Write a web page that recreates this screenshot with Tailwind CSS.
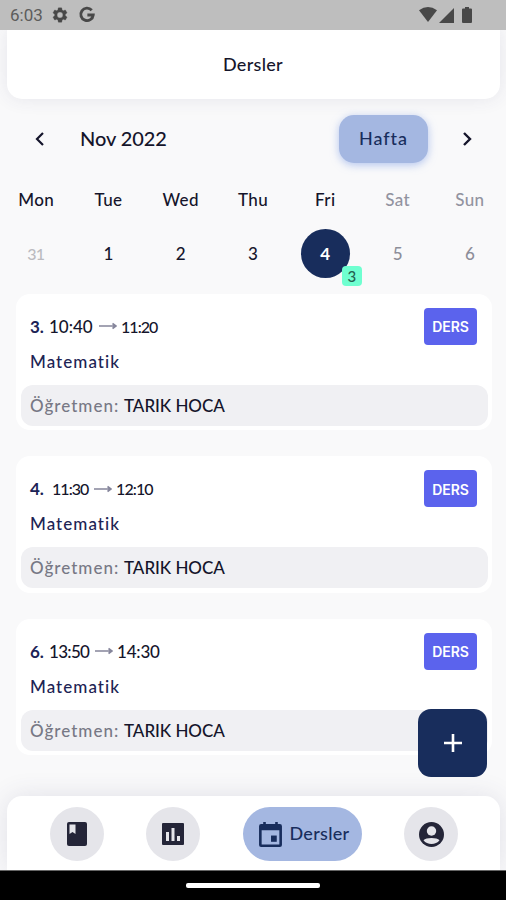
<!DOCTYPE html>
<html lang="tr">
<head>
<meta charset="utf-8">
<title>Dersler</title>
<script src="https://cdn.jsdelivr.net/npm/@tailwindcss/browser@4"></script>
</head>
<body class="w-[506px] h-[900px] overflow-hidden">
<div class="relative flex h-[900px] w-[506px] flex-col overflow-hidden bg-[#f9f9fa] font-['Lato','Noto_Sans',sans-serif] font-medium text-[#15152b]">
  <div class="relative z-10 flex h-[30px] shrink-0 items-center bg-[#bebebe] px-[10px] text-[#484848]">
    <span class="w-[41px] pt-[2px] font-['Roboto',sans-serif] text-[17px] font-normal text-[#5c5c5c]">6:03</span>
    <svg class="h-[18px] w-[18px]" viewBox="0 0 24 24" fill="currentColor" stroke="currentColor" stroke-width="0.400"><path fill-rule="evenodd" d="M19.14 12.94a7 7 0 0 0 0-1.88l2.03-1.58a.5.5 0 0 0 .12-.64l-1.92-3.32a.5.5 0 0 0-.59-.22l-2.39.96a7 7 0 0 0-1.62-.94l-.36-2.54A.5.5 0 0 0 13.9 2.4h-3.8a.5.5 0 0 0-.5.4l-.36 2.54a7 7 0 0 0-1.62.94l-2.39-.96a.5.5 0 0 0-.6.22L2.75 8.84a.5.5 0 0 0 .12.64l2.03 1.58a7 7 0 0 0 0 1.88l-2.03 1.58a.5.5 0 0 0-.12.64l1.92 3.32c.12.22.37.3.6.22l2.39-.96c.5.38 1.03.7 1.62.94l.36 2.54c.05.24.25.4.5.4h3.8a.5.5 0 0 0 .5-.4l.36-2.54a7 7 0 0 0 1.62-.94l2.39.96c.22.08.47 0 .59-.22l1.92-3.32a.5.5 0 0 0-.12-.64zM12 15.900a3.900 3.900 0 1 1 0-7.800 3.900 3.900 0 0 1 0 7.800z"/></svg>
    <svg class="ml-[9px] h-[18px] w-[18px]" viewBox="0 0 24 24" fill="none" stroke="currentColor" stroke-width="3.8"><path d="M18.300 5.700A8.300 8.300 0 1 0 20.300 12H12.500"/></svg>
    <svg class="ml-auto h-[16px] w-[18px]" viewBox="0 0 18 16" fill="currentColor"><path d="M0 3.300Q9-3.100 18 3.300L9 15z"/></svg>
    <svg class="ml-[2px] h-[15px] w-[15px]" viewBox="0 0 15 15" fill="currentColor"><path d="M15 0V15H0z"/></svg>
    <svg class="mr-[24px] ml-[8px] h-[16px] w-[10px]" viewBox="0 0 10 16" fill="currentColor"><path d="M3 0H7V1.500H9Q10 1.500 10 2.500V15Q10 16 9 16H1Q0 16 0 15V2.500Q0 1.500 1 1.500H3z"/></svg>
  </div>
  <header class="mx-[6.500px] flex h-[69px] shrink-0 items-center justify-center rounded-b-[15px] bg-white text-[18px] tracking-[0.300px] shadow-[0_0_18px_rgba(60,60,110,0.100)]">Dersler</header>

  <div class="mt-[15px] flex h-[49px] shrink-0 items-center">
    <svg class="ml-[34px] h-[16px] w-[12px]" viewBox="0 0 12 16" fill="none" stroke="currentColor" stroke-width="2.200"><path d="M9 2L3 8L9 14"/></svg>
    <span class="ml-[34px] pb-[2px] text-[20px] tracking-[-0.100px]">Nov 2022</span>
    <button class="ml-auto flex h-[48px] w-[89px] items-center justify-center rounded-[15px] bg-[#a4b7e1] text-[18px] tracking-[1px] text-[#182d5c] shadow-[0_2px_8px_rgba(130,160,230,0.600)]">Hafta</button>
    <svg class="mr-[33px] ml-[33px] h-[16px] w-[12px]" viewBox="0 0 12 16" fill="none" stroke="currentColor" stroke-width="2.400"><path d="M3 2L9 8L3 14"/></svg>
  </div>

  <div class="mt-[22px] grid h-[29px] shrink-0 grid-cols-7 items-center text-center text-[17px] tracking-[0.400px]">
    <span>Mon</span><span>Tue</span><span>Wed</span><span>Thu</span><span>Fri</span><span class="text-[#9293a0]">Sat</span><span class="text-[#9293a0]">Sun</span>
  </div>
  <div class="mt-[14px] grid h-[50px] shrink-0 grid-cols-7 place-items-center text-[17px]">
    <span class="pt-[2px] pr-px text-[16px] tracking-[-1px] text-[#bbbbc0]">31</span><span class="pt-[2px]">1</span><span class="pt-[2px]">2</span><span class="pt-[2px]">3</span>
    <span class="relative flex h-[49px] w-[49px] items-center justify-center rounded-full bg-[#182d5c] pt-[2px] font-bold text-white">4
      <span class="absolute top-[37px] left-[41px] flex h-[20px] w-[20px] items-center justify-center rounded-[4px] bg-[#6fffd0] pt-px text-[15px] font-medium text-[#24604f]">3</span>
    </span>
    <span class="pt-[2px] text-[#8d8e99]">5</span><span class="pt-[2px] text-[#8d8e99]">6</span>
  </div>

  <main class="mt-[15.500px] mr-[14px] ml-[16px] flex flex-col gap-[26px]">
    <article class="h-[136.500px] rounded-[14px] bg-white px-[5px] pt-[14px]">
      <div class="flex h-[37px] items-center pr-[10px] pl-[9px] text-[17px]">
        <b class="w-[19px] pt-px text-[#1c2356]">3.</b><span class="w-[44px] pt-px whitespace-nowrap">10:40</span>
        <svg class="mr-[4px] ml-[6px] h-[8px] w-[18px] shrink-0" viewBox="0 0 18 8" fill="none" stroke="#85859b" stroke-width="1.700"><path d="M0 4H16M13.500 1.500L17 4L13.500 6.500"/></svg>
        <span class="pt-px text-[16px] tracking-[-0.950px]">11:20</span>
        <span class="ml-auto flex h-[37px] w-[53px] items-center justify-center rounded-[4px] bg-[#5b63ed] pt-px font-['Inter',sans-serif] text-[14px] font-semibold tracking-[-0.100px] text-white">DERS</span>
      </div>
      <div class="flex h-[40px] items-center pb-[6px] pl-[9px] text-[17px] tracking-[1.050px] text-[#202353]">Matematik</div>
      <div class="mr-[-1px] flex h-[41px] items-center rounded-[12px] bg-[#f0f0f3] pt-px pl-[9px] text-[17px]"><span class="w-[94px] tracking-[1px] text-[#777885]">Öğretmen:</span><span class="tracking-[-0.050px]">TARIK HOCA</span></div>
    </article>
    <article class="h-[136.500px] rounded-[14px] bg-white px-[5px] pt-[14px]">
      <div class="flex h-[37px] items-center pr-[10px] pl-[9px] text-[17px]">
        <b class="w-[22px] pt-px text-[#1c2356]">4.</b><span class="w-[36px] pt-px text-[16px] tracking-[-0.950px] whitespace-nowrap">11:30</span>
        <svg class="mr-[4px] ml-[6px] h-[8px] w-[18px] shrink-0" viewBox="0 0 18 8" fill="none" stroke="#85859b" stroke-width="1.700"><path d="M0 4H16M13.500 1.500L17 4L13.500 6.500"/></svg>
        <span class="pt-px text-[16px] tracking-[-0.900px]">12:10</span>
        <span class="ml-auto flex h-[37px] w-[53px] items-center justify-center rounded-[4px] bg-[#5b63ed] pt-px font-['Inter',sans-serif] text-[14px] font-semibold tracking-[-0.100px] text-white">DERS</span>
      </div>
      <div class="flex h-[40px] items-center pb-[6px] pl-[9px] text-[17px] tracking-[1.050px] text-[#202353]">Matematik</div>
      <div class="mr-[-1px] flex h-[41px] items-center rounded-[12px] bg-[#f0f0f3] pt-px pl-[9px] text-[17px]"><span class="w-[94px] tracking-[1px] text-[#777885]">Öğretmen:</span><span class="tracking-[-0.050px]">TARIK HOCA</span></div>
    </article>
    <article class="h-[136.500px] rounded-[14px] bg-white px-[5px] pt-[14px]">
      <div class="flex h-[37px] items-center pr-[10px] pl-[9px] text-[17px]">
        <b class="w-[19px] pt-px text-[#1c2356]">6.</b><span class="w-[41px] pt-px tracking-[-0.700px] whitespace-nowrap">13:50</span>
        <svg class="mr-[4px] ml-[5px] h-[8px] w-[18px] shrink-0" viewBox="0 0 18 8" fill="none" stroke="#85859b" stroke-width="1.700"><path d="M0 4H16M13.500 1.500L17 4L13.500 6.500"/></svg>
        <span class="pt-px tracking-[-0.200px]">14:30</span>
        <span class="ml-auto flex h-[37px] w-[53px] items-center justify-center rounded-[4px] bg-[#5b63ed] pt-px font-['Inter',sans-serif] text-[14px] font-semibold tracking-[-0.100px] text-white">DERS</span>
      </div>
      <div class="flex h-[40px] items-center pb-[6px] pl-[9px] text-[17px] tracking-[1.050px] text-[#202353]">Matematik</div>
      <div class="mr-[-1px] flex h-[41px] items-center rounded-[12px] bg-[#f0f0f3] pt-px pl-[9px] text-[17px]"><span class="w-[94px] tracking-[1px] text-[#777885]">Öğretmen:</span><span class="tracking-[-0.050px]">TARIK HOCA</span></div>
    </article>
  </main>

  <button class="absolute top-[709px] left-[418px] flex h-[68px] w-[69px] items-center justify-center rounded-[13px] bg-[#182d5c] text-white" aria-label="Ekle">
    <svg class="h-[20px] w-[20px]" viewBox="0 0 20 20" fill="none" stroke="currentColor" stroke-width="2.600"><path d="M10 1V19M1 10H19"/></svg>
  </button>

  <nav class="relative mx-[6.500px] mt-auto flex h-[74px] shrink-0 items-center justify-between rounded-t-[15px] bg-white pt-[2px] pr-[41.500px] pl-[43px] text-[#242538] shadow-[0_0_26px_rgba(60,60,110,0.130)]">
    <div class="flex h-[54px] w-[54px] items-center justify-center rounded-full bg-[#e5e5ea]">
      <svg class="h-[24px] w-[20px]" viewBox="0 0 20 24" fill="currentColor"><rect width="20" height="24" rx="2"/><path d="M2.500 2.500H8.500V12L5.500 10L2.500 12z" fill="#e5e5ea"/></svg>
    </div>
    <div class="flex h-[54px] w-[54px] items-center justify-center rounded-full bg-[#e5e5ea]">
      <svg class="h-[22px] w-[22px]" viewBox="0 0 22 22" fill="currentColor"><rect width="22" height="22" rx="1"/><path d="M4 9H7V18H4zM9.500 5H12.500V18H9.500zM15 13H18V18H15z" fill="#e5e5ea"/></svg>
    </div>
    <div class="flex h-[54px] w-[119px] items-center rounded-full bg-[#a4b7e1] pl-[16px] text-[18px] text-[#182d5c]">
      <svg class="mr-[8px] h-[25px] w-[23px] shrink-0" viewBox="0 0 22 24" fill="currentColor"><path fill-rule="evenodd" d="M4 0H6.500V2H15.500V0H18V2H20Q22 2 22 4V22Q22 24 20 24H2Q0 24 0 22V4Q0 2 2 2H4zM2.500 8V21.500H19.500V8z"/><rect x="11.500" y="13" width="5.500" height="6"/></svg>
      <span class="pb-px tracking-[0.300px]">Dersler</span>
    </div>
    <div class="flex h-[54px] w-[54px] items-center justify-center rounded-full bg-[#e5e5ea]">
      <svg class="h-[25px] w-[25px]" viewBox="0 0 25 25"><circle cx="12.500" cy="12.500" r="12.500" fill="currentColor"/><circle cx="12.500" cy="9" r="4.700" fill="#e5e5ea"/><path d="M4.500 18.200C7 15.300 18 15.300 20.500 18.200C17 23.200 8 23.200 4.500 18.200z" fill="#e5e5ea"/></svg>
    </div>
  </nav>
  <div class="relative flex h-[30px] shrink-0 justify-center border-t border-[#666] bg-black pt-[12px]"><div class="h-[5px] w-[134px] rounded-[2px] bg-white"></div></div>
</div>
</body>
</html>
